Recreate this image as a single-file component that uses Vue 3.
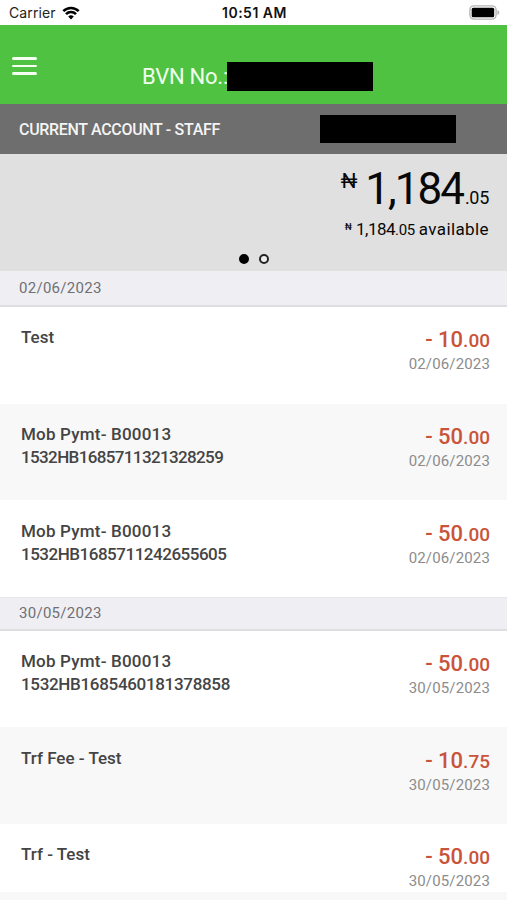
<template>
  <main class="app">
    <div class="status-bar">
      <div class="carrier">
        <span>Carrier</span>
        <svg class="wifi" viewBox="0 0 18 14">
          <path d="M1.3 5.1a11 11 0 0 1 15.4 0" />
          <path d="M4 8.1a7.1 7.1 0 0 1 10 0" />
          <path class="wifi-dot" d="M6.2 10.6a4 4 0 0 1 5.6 0L9 13.5z" />
        </svg>
      </div>
      <div class="time">10:51 AM</div>
      <svg class="battery" viewBox="0 0 31 15">
        <rect x="0.9" y="0.9" width="26.2" height="13.2" rx="4" />
        <rect class="battery-level" x="2.7" y="2.8" width="22.5" height="9.4" rx="1.5" />
        <path class="battery-cap" d="M28.4 5.2c2.6.5 2.6 4.2 0 4.7z" />
      </svg>
    </div>

    <header class="top-bar">
      <button class="menu-btn" aria-label="Menu">
        <span></span>
        <span></span>
        <span></span>
      </button>
      <div class="bvn">
        <span class="bvn-label">BVN No.:</span>
        <span class="masked bvn-mask"></span>
      </div>
    </header>

    <section class="account-bar">
      <h1>CURRENT ACCOUNT - STAFF</h1>
      <span class="masked account-mask"></span>
    </section>

    <section class="balance">
      <div class="balance-main">
        <span class="currency">₦</span>
        <span class="whole">1,184</span>
        <span class="cents">.05</span>
      </div>
      <div class="balance-available">
        <span class="currency-small">₦</span>
        <span class="available-whole">1,184</span>
        <span class="available-cents">.05</span>
        <span class="available-text">available</span>
      </div>
      <div class="pager">
        <span class="dot active"></span>
        <span class="dot"></span>
      </div>
    </section>

    <section v-for="group in groups" :key="group.date" class="group">
      <h2>{{ group.date }}</h2>
      <div v-for="item in group.items" :key="item.id" class="row">
        <div class="description">
          <p :class="{ payment: item.reference }">{{ item.title }}</p>
          <p v-if="item.reference" :style="{ letterSpacing: item.tracking + 'px' }">
            {{ item.reference }}
          </p>
        </div>
        <div class="figures">
          <div class="amount">- {{ item.whole }}<small>.{{ item.cents }}</small></div>
          <div class="date">{{ group.date }}</div>
        </div>
      </div>
    </section>
  </main>
</template>

<script setup>
const groups = [
  {
    date: '02/06/2023',
    items: [
      { id: 1, title: 'Test', whole: '10', cents: '00' },
      { id: 2, title: 'Mob Pymt- B00013', reference: '1532HB1685711321328259', tracking: -0.63, whole: '50', cents: '00' },
      { id: 3, title: 'Mob Pymt- B00013', reference: '1532HB1685711242655605', tracking: -0.48, whole: '50', cents: '00' },
    ],
  },
  {
    date: '30/05/2023',
    items: [
      { id: 4, title: 'Mob Pymt- B00013', reference: '1532HB1685460181378858', tracking: -0.32, whole: '50', cents: '00' },
      { id: 5, title: 'Trf Fee - Test', whole: '10', cents: '75' },
      { id: 6, title: 'Trf - Test', whole: '50', cents: '00' },
    ],
  },
]
</script>

<style>
body {
  background: #f8f8f8;
}
</style>

<style scoped>
.app {
  height: 900px;
  overflow: hidden;
  background: #f8f8f8;
  font-family: Roboto, "Noto Sans", sans-serif;
  color: #444;
}

.status-bar {
  height: 25px;
  padding: 0 7px 0 9px;
  box-sizing: border-box;
  display: grid;
  grid-template-columns: 1fr auto 1fr;
  align-items: center;
  background: white;
  color: #222;
  font-family: Inter, sans-serif;
  font-size: 14px;
  line-height: 25px;
}

.carrier {
  display: flex;
  align-items: center;
  gap: 6px;
  letter-spacing: 0.1px;
}

.wifi {
  width: 18px;
  height: 14px;
  fill: none;
  stroke: #000;
  stroke-width: 2.6;
}

.wifi-dot {
  fill: #000;
  stroke: none;
}

.time {
  color: #111;
  font-weight: 600;
  letter-spacing: 0.5px;
}

.battery {
  justify-self: end;
  width: 31px;
  height: 15px;
  fill: none;
  stroke: #b5b5b5;
  stroke-width: 1.4;
}

.battery-level {
  fill: #000;
  stroke: none;
}

.battery-cap {
  fill: #b5b5b5;
  stroke: none;
}

.top-bar {
  height: 79px;
  padding-left: 12px;
  display: flex;
  background: #4fc242;
}

.menu-btn {
  width: 25px;
  height: 18px;
  margin-top: 32px;
  padding: 0;
  border: 0;
  background: none;
  display: flex;
  flex-direction: column;
  justify-content: space-between;
}

.menu-btn span {
  width: 25px;
  height: 2.6px;
  border-radius: 2px;
  background: #f5fff2;
}

.bvn {
  display: flex;
  align-items: flex-start;
  margin: 37px 0 0 105px;
}

.bvn-label {
  width: 85px;
  color: #f0ffec;
  font-size: 22px;
  letter-spacing: -0.25px;
  line-height: 29px;
  white-space: nowrap;
}

.masked {
  display: block;
  background: #000;
}

.bvn-mask {
  width: 146px;
  height: 29px;
}

.account-bar {
  height: 50px;
  padding: 0 51px 0 19px;
  display: flex;
  align-items: center;
  justify-content: space-between;
  background: #6e6e6e;
}

.account-bar h1 {
  margin: 0;
  color: #f4f4f4;
  font-size: 16px;
  font-weight: 500;
  letter-spacing: -0.32px;
}

.account-mask {
  width: 136px;
  height: 28px;
}

.balance {
  height: 117px;
  background: #e0e0e0;
  color: #080808;
}

.balance-main {
  height: 66px;
  padding-right: 18px;
  display: flex;
  justify-content: flex-end;
  align-items: baseline;
}

.currency {
  align-self: flex-start;
  margin: 17px 8px 0 0;
  font-size: 21px;
  line-height: 21px;
}

.whole {
  font-size: 44px;
  letter-spacing: -2px;
  line-height: 71px;
}

.cents {
  margin-left: 2px;
  font-size: 18px;
  letter-spacing: -0.3px;
}

.balance-available {
  height: 20px;
  padding-right: 18px;
  display: flex;
  justify-content: flex-end;
  align-items: baseline;
  line-height: 19px;
}

.currency-small {
  align-self: flex-start;
  margin: -2px 4px 0 0;
  font-size: 9px;
  font-weight: 500;
}

.available-whole {
  font-size: 17px;
  letter-spacing: -0.5px;
}

.available-cents {
  font-size: 15px;
  letter-spacing: -0.4px;
}

.available-text {
  margin-left: 4px;
  font-size: 17px;
  letter-spacing: 0.4px;
}

.pager {
  display: flex;
  justify-content: center;
  gap: 10px;
  padding-top: 14px;
}

.dot {
  width: 10px;
  height: 10px;
  box-sizing: border-box;
  border: 2px solid #222;
  border-radius: 50%;
  background: #eee;
}

.dot.active {
  border-color: #000;
  background: #000;
}

.group h2 {
  height: 36px;
  margin: 0;
  padding-left: 19px;
  box-sizing: border-box;
  border-bottom: 2px solid #dedee1;
  background: #efeff3;
  color: #707074;
  font-size: 15px;
  font-weight: 400;
  letter-spacing: 0.28px;
  line-height: 35px;
}

.group + .group h2 {
  height: 34px;
  border-top: 1px solid #e6e6e9;
  line-height: 31px;
}

.row {
  height: 96.6px;
  padding: 19.4px 17px 0 21px;
  box-sizing: border-box;
  display: flex;
  justify-content: space-between;
  background: white;
}

.row:nth-of-type(even) {
  background: #f8f8f8;
}

.group:last-child .row:last-child {
  height: 68px;
}

.description p {
  margin: 0;
  font-size: 17px;
  font-weight: 500;
  line-height: 23px;
}

.description .payment {
  letter-spacing: 0.2px;
}

.figures {
  text-align: right;
}

.amount {
  color: #c95439;
  font-size: 22px;
  font-weight: 500;
  line-height: 28px;
}

.amount small {
  font-size: 19px;
}

.date {
  margin-top: -1px;
  color: #8c8c8c;
  font-size: 15px;
  letter-spacing: 0.15px;
  line-height: 20px;
}
</style>
